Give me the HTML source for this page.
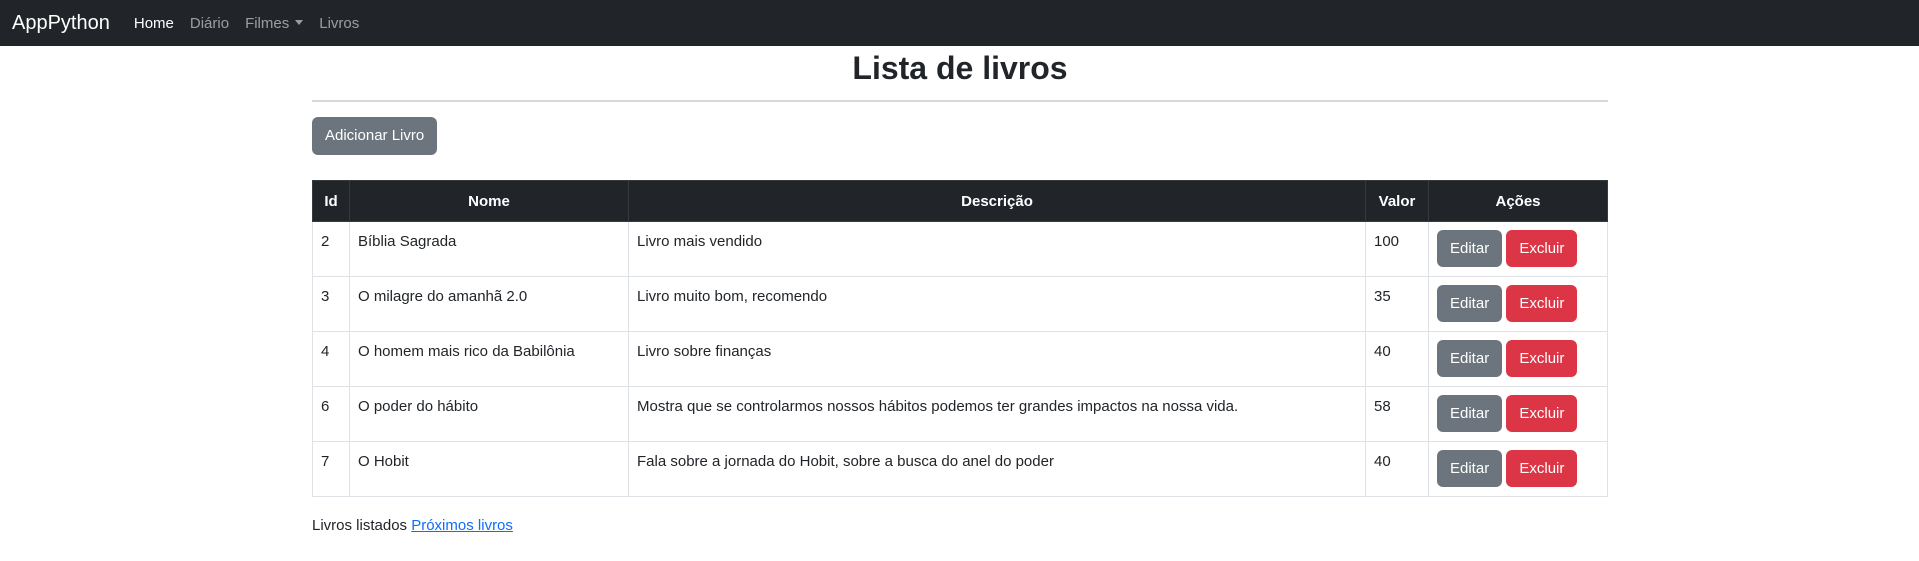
<!DOCTYPE html>
<html><head><meta charset="utf-8"><style>
*{box-sizing:border-box}
body{margin:0;width:1919px;height:561px;overflow:hidden;font-family:"Liberation Sans",sans-serif;font-size:15px;color:#212529;background:#fff}
.nav{height:46px;background:#212529;display:flex;align-items:center;padding-left:12px}
.brand{color:#fff;font-size:20px;margin-right:24px}
.nav a{font-size:15px;color:rgba(255,255,255,.55);margin-right:16px;text-decoration:none}
.nav a.act{color:#fff}
.caret{display:inline-block;border-top:5px solid rgba(255,255,255,.55);border-left:4px solid transparent;border-right:4px solid transparent;vertical-align:3px;margin-left:6px}
.c{position:absolute;left:312px;width:1296px;top:46px}
h1{margin:0;text-align:center;font-size:32px;font-weight:bold;height:42px;line-height:44px}
hr{margin:12px 0 0;border:0;border-top:2px solid #d8d8d8}
.btn{display:inline-block;color:#fff;border-radius:6px;font-size:15px;line-height:24px;padding:7px 13px}
.sec{background:#6c757d}.dan{background:#dc3545}
table{border-collapse:collapse;width:1296px;margin-top:25px}
th{background:#212529;color:#fff;border:1px solid #373b3e;height:41px;padding:0 8px;font-weight:bold}
td{border:1px solid #dee2e6;padding:8px;vertical-align:top;height:55px;line-height:24px}
td .btn{padding:7px 13px 6px;line-height:24px}
p{margin:20px 0 0}
a.l{color:#0d6efd}
</style></head><body>
<div class="nav"><span class="brand">AppPython</span><a class="act">Home</a><a>Diário</a><a>Filmes<span class="caret"></span></a><a>Livros</a></div>
<div class="c">
<h1>Lista de livros</h1>
<hr>
<div style="margin-top:15px"><span class="btn sec">Adicionar Livro</span></div>
<table>
<tr><th style="width:37px">Id</th><th style="width:279px">Nome</th><th style="width:737px">Descrição</th><th style="width:63px">Valor</th><th>Ações</th></tr>
<tr><td>2</td><td>Bíblia Sagrada</td><td>Livro mais vendido</td><td>100</td><td><span class="btn sec">Editar</span> <span class="btn dan">Excluir</span></td></tr>
<tr><td>3</td><td>O milagre do amanhã 2.0</td><td>Livro muito bom, recomendo</td><td>35</td><td><span class="btn sec">Editar</span> <span class="btn dan">Excluir</span></td></tr>
<tr><td>4</td><td>O homem mais rico da Babilônia</td><td>Livro sobre finanças</td><td>40</td><td><span class="btn sec">Editar</span> <span class="btn dan">Excluir</span></td></tr>
<tr><td>6</td><td>O poder do hábito</td><td>Mostra que se controlarmos nossos hábitos podemos ter grandes impactos na nossa vida.</td><td>58</td><td><span class="btn sec">Editar</span> <span class="btn dan">Excluir</span></td></tr>
<tr><td>7</td><td>O Hobit</td><td>Fala sobre a jornada do Hobit, sobre a busca do anel do poder</td><td>40</td><td><span class="btn sec">Editar</span> <span class="btn dan">Excluir</span></td></tr>
</table>
<p>Livros listados <a class="l" href="#">Próximos livros</a></p>
</div>
</body></html>
